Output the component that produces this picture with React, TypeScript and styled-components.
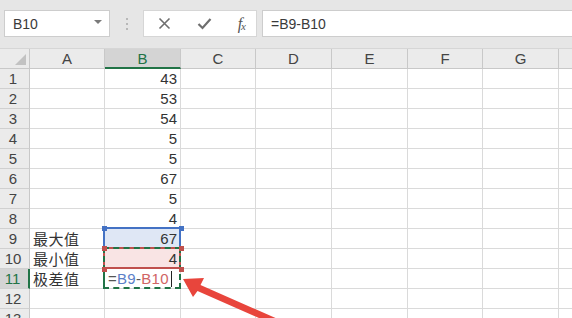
import styled, { createGlobalStyle } from 'styled-components'

const GlobalStyle = createGlobalStyle`
    html, body {
        margin: 0;
        padding: 0;
        background: #ffffff;
        overflow: hidden;
    }
    body {
        font-family: "Liberation Sans", "Noto Sans CJK SC", sans-serif;
        color: #333333;
    }
`

const Page = styled.div`
    position: relative;
    width: 572px;
    height: 318px;
    overflow: hidden;
`

const FormulaBar = styled.div`
    display: flex;
    align-items: stretch;
    height: 49px;
    box-sizing: border-box;
    padding: 10px 0 11px 4px;
    background: #e6e6e6;
    border-bottom: 1px solid #d6d6d6;
`

const NameBox = styled.div`
    display: flex;
    align-items: center;
    justify-content: space-between;
    width: 106px;
    box-sizing: border-box;
    padding: 0 7px 0 8px;
    background: #ffffff;
    border: 1px solid #cdcdcd;
    font-size: 14px;
    color: #3a3a3a;
`

const Caret = styled.span`
    width: 0;
    height: 0;
    border-left: 4px solid transparent;
    border-right: 4px solid transparent;
    border-top: 4px solid #7a7a7a;
    margin-top: -3px;
`

const Dots = styled.div`
    display: flex;
    flex-direction: column;
    justify-content: center;
    align-items: center;
    gap: 3px;
    width: 33px;

    span {
        width: 2px;
        height: 2px;
        background: #b8b8b8;
    }
`

const ButtonBox = styled.div`
    display: flex;
    align-items: center;
    width: 114px;
    box-sizing: border-box;
    padding: 0 11px 0 14px;
    justify-content: space-between;
    background: #ffffff;
    border: 1px solid #d6d6d6;
`

const Fx = styled.span`
    font-family: "Liberation Serif", serif;
    font-style: italic;
    font-size: 16px;
    color: #555555;
    letter-spacing: -1px;

    sub {
        font-size: 11px;
        vertical-align: -1px;
    }
`

const FormulaInput = styled.div`
    flex: 1;
    display: flex;
    align-items: center;
    margin-left: 5px;
    padding-left: 8px;
    background: #ffffff;
    border-top: 1px solid #cdcdcd;
    border-bottom: 1px solid #cdcdcd;
    border-left: 1px solid #cdcdcd;
    font-size: 14px;
    color: #3a3a3a;
`

const Sheet = styled.div`
    display: grid;
    grid-template-columns: 30px 75px 76px 75px 76px 76px 75px 76px 76px;
    grid-auto-rows: 20px;
`

const Corner = styled.div`
    position: relative;
    background: #ebebeb;
    border-right: 1px solid #c8c8c8;
    border-bottom: 1px solid #c8c8c8;
    box-sizing: border-box;

    &::after {
        content: '';
        position: absolute;
        right: 3px;
        bottom: 3px;
        width: 0;
        height: 0;
        border-left: 11px solid transparent;
        border-bottom: 11px solid #c2c2c2;
    }
`

const ColHead = styled.div<{ $active?: boolean }>`
    display: flex;
    align-items: center;
    justify-content: center;
    box-sizing: border-box;
    background: ${(p) => (p.$active ? '#d4d4d4' : '#ebebeb')};
    border-right: 1px solid #c8c8c8;
    border-bottom: ${(p) => (p.$active ? '2px solid #217346' : '1px solid #c8c8c8')};
    font-size: 15px;
    color: ${(p) => (p.$active ? '#217346' : '#444444')};
`

const RowHead = styled.div<{ $active?: boolean }>`
    display: flex;
    align-items: center;
    justify-content: center;
    box-sizing: border-box;
    padding-right: 3px;
    background: ${(p) => (p.$active ? '#d4d4d4' : '#ebebeb')};
    border-right: ${(p) => (p.$active ? '2px solid #217346' : '1px solid #c8c8c8')};
    border-bottom: 1px solid #d0d0d0;
    font-size: 15px;
    color: ${(p) => (p.$active ? '#217346' : '#444444')};
`

type Mark = 'blue' | 'red' | 'active' | undefined

const markFill: Record<string, string> = {
    blue: '#dfe7f5',
    red: '#f9e4e4',
    active: '#ffffff',
}

const Cell = styled.div<{ $right?: boolean; $mark?: Mark }>`
    position: relative;
    display: flex;
    align-items: center;
    justify-content: ${(p) => (p.$right ? 'flex-end' : 'flex-start')};
    box-sizing: border-box;
    padding: 0 3px 0 3px;
    background: ${(p) => (p.$mark ? markFill[p.$mark] : '#ffffff')};
    border-right: 1px solid #dadada;
    border-bottom: 1px solid #dadada;
    font-size: 15px;
    color: #333333;
    white-space: nowrap;
`

const Label = styled.span`
    font-family: "Noto Sans CJK SC", sans-serif;
    font-size: 15px;
    letter-spacing: 0.5px;
    color: #333333;
`

const Frame = styled.div<{ $color: string; $dashed?: boolean; $rows?: number }>`
    position: absolute;
    top: -2px;
    left: -2px;
    width: 78px;
    height: ${(p) => (p.$rows ?? 1) * 20 + 2}px;
    box-sizing: border-box;
    border: 2px ${(p) => (p.$dashed ? 'dashed' : 'solid')} ${(p) => p.$color};
    pointer-events: none;
    z-index: 1;
`

const ActiveEdge = styled.div`
    position: absolute;
    top: -1px;
    left: -2px;
    width: 2px;
    height: 21px;
    background: #217346;
    z-index: 2;
`

const Handle = styled.span<{ $color: string; $x: 'left' | 'right'; $y: 'top' | 'bottom' }>`
    position: absolute;
    width: 5px;
    height: 5px;
    background: ${(p) => p.$color};
    ${(p) => (p.$x === 'left' ? 'left: -3px;' : 'right: -4px;')}
    ${(p) => (p.$y === 'top' ? 'top: -3px;' : 'bottom: -4px;')}
    z-index: 3;
`

const Formula = styled.span`
    font-size: 15px;
    letter-spacing: 0.3px;
    color: #555555;
`

const Ref = styled.span<{ $color: string }>`
    color: ${(p) => p.$color};
`

const TextCursor = styled.span`
    display: inline-block;
    width: 1px;
    height: 16px;
    margin-left: 2px;
    background: #222222;
    vertical-align: -3px;
`

const Arrow = styled.svg`
    position: absolute;
    left: 0;
    top: 0;
    pointer-events: none;
    z-index: 5;
`

const columns = ['A', 'B', 'C', 'D', 'E', 'F', 'G', 'H']

const values: Record<number, string> = {
    1: '43',
    2: '53',
    3: '54',
    4: '5',
    5: '5',
    6: '67',
    7: '5',
    8: '4',
    9: '67',
    10: '4',
}

const labels: Record<number, string> = {
    9: '最大值',
    10: '最小值',
    11: '极差值',
}

const BLUE = '#4472c4'
const RED = '#c0504d'
const GREEN = '#217346'

const renderB = (row: number) => {
    const key = `B${row}`
    if (row === 9) {
        return (
            <Cell key={key} $right $mark="blue">
                <Frame $color={BLUE} />
                <Handle $color={BLUE} $x="left" $y="top" />
                <Handle $color={BLUE} $x="right" $y="top" />
                {values[row]}
            </Cell>
        )
    }
    if (row === 10) {
        return (
            <Cell key={key} $right $mark="red">
                <Frame $color={RED} />
                <Frame $color={GREEN} $dashed $rows={2} />
                <Handle $color={RED} $x="left" $y="top" />
                <Handle $color={RED} $x="right" $y="top" />
                <Handle $color={RED} $x="left" $y="bottom" />
                <Handle $color={RED} $x="right" $y="bottom" />
                {values[row]}
            </Cell>
        )
    }
    if (row === 11) {
        return (
            <Cell key={key} $mark="active">
                <ActiveEdge />
                <Formula>
                    =<Ref $color="#5b80c8">B9</Ref>-<Ref $color="#d06464">B10</Ref>
                </Formula>
                <TextCursor />
            </Cell>
        )
    }
    return (
        <Cell key={key} $right>
            {values[row]}
        </Cell>
    )
}

const App = () => {
    const rows = Array.from({ length: 13 }, (_, i) => i + 1)

    return (
        <Page>
            <GlobalStyle />
            <FormulaBar>
                <NameBox>
                    B10
                    <Caret />
                </NameBox>
                <Dots>
                    <span />
                    <span />
                    <span />
                </Dots>
                <ButtonBox>
                    <svg width="13" height="13" viewBox="0 0 13 13">
                        <path d="M1.5 1.5 L11.5 11.5 M11.5 1.5 L1.5 11.5" stroke="#6e6e6e" strokeWidth="1.6" fill="none" />
                    </svg>
                    <svg width="15" height="13" viewBox="0 0 15 13">
                        <path d="M1.5 7 L5.5 11 L13.5 2" stroke="#6e6e6e" strokeWidth="2.2" fill="none" />
                    </svg>
                    <Fx>
                        f<sub>x</sub>
                    </Fx>
                </ButtonBox>
                <FormulaInput>=B9-B10</FormulaInput>
            </FormulaBar>
            <Sheet>
                <Corner />
                {columns.map((c) => (
                    <ColHead key={c} $active={c === 'B'}>
                        {c}
                    </ColHead>
                ))}
                {rows.map((r) => [
                    <RowHead key={`h${r}`} $active={r === 11}>
                        {r}
                    </RowHead>,
                    <Cell key={`A${r}`}>{labels[r] ? <Label>{labels[r]}</Label> : null}</Cell>,
                    renderB(r),
                    ...columns.slice(2).map((c) => <Cell key={`${c}${r}`} />),
                ])}
            </Sheet>
            <Arrow width="572" height="318" viewBox="0 0 572 318">
                <polygon
                    points="183,279 204,278 200.5,285 296,327 293,333 197.5,291 193,297"
                    fill="#e8453c"
                />
            </Arrow>
        </Page>
    )
}

export default App
